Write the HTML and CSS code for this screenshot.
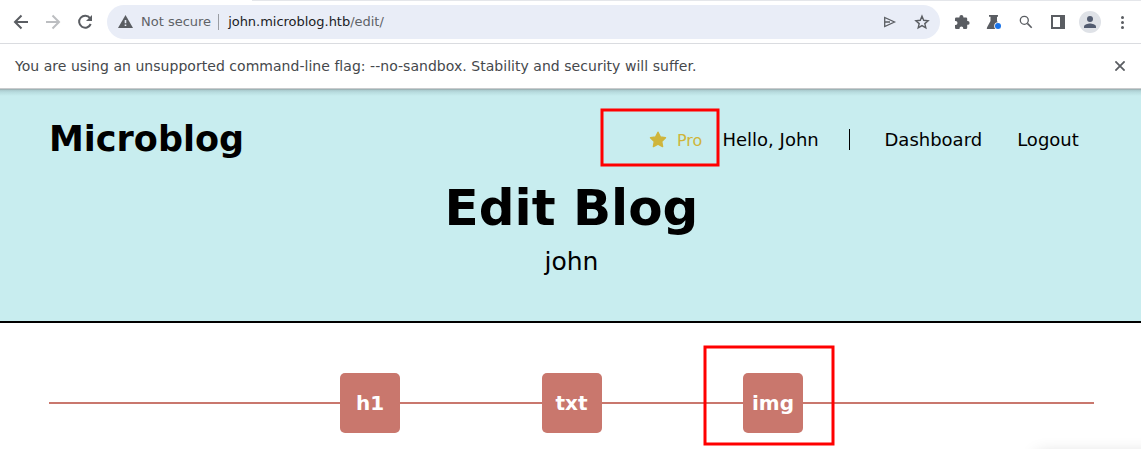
FILE: index.html
```html
<!DOCTYPE html>
<html lang="en">
<head>
<meta charset="utf-8">
<title>Edit Blog</title>
<link rel="stylesheet" href="styles.css">
</head>
<body>
<div class="window">
  <div class="toolbar">
    <div class="tab-edge"></div>
    <svg class="nav-icons" width="107" height="44" viewBox="0 0 107 44" fill="none" stroke="#5a5d62" stroke-width="2">
      <path d="M28 22H15.500M21.500 15.500L15 22l6.500 6.500"/>
      <path stroke="#bcbec1" d="M46 22h12.500M52.500 15.500L59 22l-6.500 6.500"/>
      <path d="M90 18.200A6 6 0 1 0 90.700 24"/>
      <path fill="#5a5d62" stroke="none" d="M92 15v6h-6z"/>
    </svg>
    <div class="omnibox">
      <svg class="warn" width="15" height="13" viewBox="0 0 15 13"><path fill="#5a5d62" d="M7.500 0L15 13H0z"/><path fill="#e9edf7" d="M6.700 5h1.600v3.300H6.700zM6.700 9.500h1.600V11H6.700z"/></svg>
      <span class="security">Not secure</span>
      <span class="divider"></span>
      <span class="url">john.microblog.htb<span class="path">/edit/</span></span>
      <svg class="omni-icons" width="60" height="34" viewBox="880 5 60 34" fill="none" stroke="#5a5d62" stroke-width="1.300">
        <path d="M884.700 17.500L894.500 22l-9.800 4.500zM885 22h5"/>
        <path stroke-width="1.400" d="M922 16.200l1.700 4.100 4.400.4-3.300 2.900 1 4.300-3.800-2.300-3.800 2.300 1-4.300-3.300-2.900 4.400-.4z"/>
      </svg>
    </div>
    <svg class="actions" width="201" height="44" viewBox="940 0 201 44">
      <path fill="#5a5d62" d="M956.200 17.500h3.200v-.6a2 2 0 0 1 4 0v.6h2.600q1.200 0 1.200 1.200v2.300h.5a1.900 1.900 0 0 1 0 3.800h-.5v3q0 1.200-1.200 1.200h-2.700v-.5a1.900 1.900 0 0 0-3.800 0v.5h-3.300q-1.200 0-1.200-1.200v-2.700h.5a2 2 0 0 0 0-4h-.5v-2.400q0-1.200 1.200-1.200z"/>
      <path fill="#5a5d62" d="M989 15h9v1.700h-1v4.300l4 8h-14.200q0-1.500.7-2.500l3-5.500v-4.300H989z"/>
      <circle cx="998" cy="26" r="3.800" fill="#fff"/><circle cx="998" cy="26" r="3" fill="#1a73e8"/>
      <g fill="none" stroke="#5a5d62"><circle cx="1024.300" cy="20.300" r="4" stroke-width="1.300"/><path stroke-width="1.600" d="M1027.400 23.400l4.300 4.300"/></g>
      <path fill="#5a5d62" fill-rule="evenodd" d="M1051 15h14v14h-14zM1053 17v10h7V17z"/>
      <circle cx="1090" cy="22" r="11" fill="#dfe2e7"/>
      <circle cx="1090" cy="19" r="3" fill="#535c70"/><path fill="#535c70" d="M1084 28v-1.500c0-2 4-3 6-3s6 1 6 3V28z"/>
      <g fill="#5a5d62"><circle cx="1122.500" cy="17.500" r="1.500"/><circle cx="1122.500" cy="22.500" r="1.500"/><circle cx="1122.500" cy="27.500" r="1.500"/></g>
    </svg>
  </div>
  <div class="infobar">
    <span class="message">You are using an unsupported command-line flag: --no-sandbox. Stability and security will suffer.</span>
    <svg width="10" height="10" viewBox="0 0 10 10"><path stroke="#5a5d62" stroke-width="1.800" d="M.4.4l9.200 9.200M9.600.4L.4 9.600"/></svg>
  </div>
  <header class="hero">
    <div class="topnav">
      <div class="brand">Microblog</div>
      <div class="pro">
        <svg width="18" height="17" viewBox="0 0 18 17"><path fill="#cfb53b" stroke="#cfb53b" stroke-width="1.400" stroke-linejoin="round" d="M9 1.200l2.300 4.700 5.200.8-3.800 3.700.9 5.200L9 13.200l-4.600 2.400.9-5.200-3.800-3.700 5.200-.8z"/></svg>
        <span class="pro-label">Pro</span>
      </div>
      <span class="hello">Hello, John</span>
      <span class="bar"></span>
      <a class="dashboard">Dashboard</a>
      <a class="logout">Logout</a>
    </div>
    <h1 class="title">Edit Blog</h1>
    <div class="blog-name">john</div>
  </header>
  <main class="editor">
    <div class="tools">
      <div class="tool">h1</div>
      <div class="tool">txt</div>
      <div class="tool">img</div>
    </div>
  </main>
  <div class="popup"></div>
  <svg class="marks" width="1141" height="449" fill="none" stroke="#f00" stroke-width="3">
    <rect x="602" y="110" width="116" height="55"/>
    <rect x="705" y="347" width="128" height="97"/>
  </svg>
</div>
</body>
</html>
```
FILE: styles.css
```css
* { box-sizing: border-box; }
body { margin: 0; font-family: "DejaVu Sans", sans-serif; color: #000; background: #fff; }
.window { position: relative; width: 1141px; height: 449px; overflow: hidden; }
svg { display: block; flex: none; }
span, a { white-space: nowrap; }

.toolbar { position: relative; display: flex; align-items: center; height: 44px; border-bottom: 1px solid #dadce0; }
.tab-edge { position: absolute; top: 0; left: 252px; right: 0; height: 1px; background: #e4e6ea; }
.omnibox { display: flex; align-items: center; width: 833px; height: 34px; padding-left: 11px; border-radius: 17px; background: #e9edf7; font-size: 13px; }
.security { margin-left: 8px; color: #5f6368; }
.divider { width: 1px; height: 16px; margin: 0 9px 0 7px; background: #9a9da3; }
.url { color: #202124; letter-spacing: -.02px; }
.path { color: #5f6368; }
.omni-icons { margin-left: auto; }

.infobar { display: flex; align-items: center; justify-content: space-between; height: 45px; padding: 0 16px 0 15px; border-bottom: 1px solid #c9cbcd; font-size: 14px; color: #45484c; }
.message { letter-spacing: .035px; }

.hero { height: 234px; border-bottom: 2px solid #000; background: linear-gradient(#929fa1 0, #a9c9cc 1px, #b7dbde 3px, #c8edef 7px); text-align: center; }
.topnav { display: flex; align-items: center; height: 101px; padding-left: 49px; font-size: 18px; }
.brand { width: 600px; padding-bottom: 2px; text-align: left; font-size: 35px; font-weight: bold; line-height: 40px; }
.pro { display: flex; align-items: center; gap: 10px; width: 73.500px; color: #cfb53b; font-size: 16px; }
.pro-label { padding-top: 2px; }
.hello { width: 126.500px; text-align: left; }
.bar { width: 1px; height: 21px; background: #000; }
.dashboard { margin-left: 34.500px; }
.logout { margin-left: 35px; }
.title { margin: -11px 0 0; padding-left: 2px; font-size: 50px; line-height: 58px; }
.blog-name { margin-top: 10px; padding-left: 2px; font-size: 25px; line-height: 30px; }

.editor { padding: 50px 47px 0 49px; }
.tools { display: flex; justify-content: center; gap: 141.500px; height: 60px; background: linear-gradient(#c9776d, #c9776d) 0 29px / 100% 2px no-repeat; }
.tool { display: flex; align-items: center; justify-content: center; width: 60px; height: 60px; border-radius: 5px; background: #c9776d; color: #fff; font-size: 20px; font-weight: bold; }

.popup { position: absolute; left: 1037px; top: 455px; width: 140px; height: 40px; box-shadow: 0 0 18px rgba(0, 0, 0, .2); }
.marks { position: absolute; inset: 0; }
```
